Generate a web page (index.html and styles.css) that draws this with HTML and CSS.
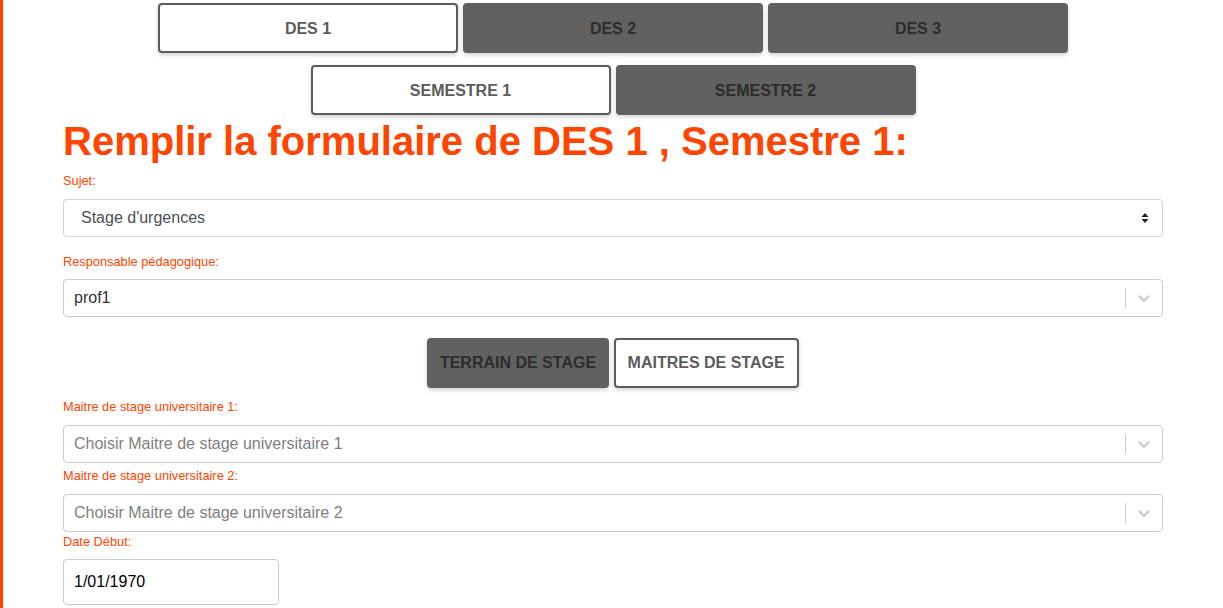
FILE: index.html
```html
<!DOCTYPE html>
<html lang="fr">
<head>
<meta charset="utf-8">
<title>Formulaire DES</title>
<link rel="stylesheet" href="styles.css">
</head>
<body>
<div class="page">
  <nav class="tabs tabs--des">
    <button class="tab tab--active">DES 1</button>
    <button class="tab tab--idle">DES 2</button>
    <button class="tab tab--idle">DES 3</button>
  </nav>
  <nav class="tabs tabs--sem">
    <button class="tab tab--active">SEMESTRE 1</button>
    <button class="tab tab--idle">SEMESTRE 2</button>
  </nav>

  <form class="form">
    <h1 class="title">Remplir la formulaire de DES 1 , Semestre 1:</h1>

    <div class="field">
      <label class="label">Sujet:</label>
      <div class="native-select">
        <span class="native-select__value">Stage d'urgences</span>
        <svg class="native-select__arrow" width="8" height="12" viewBox="0 0 8 12"><path d="M4 1 L7.5 5 H0.5 Z M4 11 L7.5 7 H0.5 Z" fill="#222"/></svg>
      </div>
    </div>

    <div class="field">
      <label class="label">Responsable pédagogique:</label>
      <div class="rselect">
        <span class="rselect__value">prof1</span>
        <span class="rselect__sep"></span>
        <span class="rselect__ind"><svg width="20" height="20" viewBox="0 0 20 20"><path fill="#ccc" d="M4.516 7.548c0.436-0.446 1.043-0.481 1.576 0l3.908 3.747 3.908-3.747c0.533-0.481 1.141-0.446 1.574 0 0.436 0.445 0.408 1.197 0 1.615-0.406 0.418-4.695 4.502-4.695 4.502-0.217 0.223-0.502 0.335-0.787 0.335s-0.57-0.112-0.789-0.335c0 0-4.287-4.084-4.695-4.502s-0.436-1.17 0-1.615z"/></svg></span>
      </div>
    </div>

    <div class="subtabs">
      <button type="button" class="subtab subtab--idle">TERRAIN DE STAGE</button>
      <button type="button" class="subtab subtab--active">MAITRES DE STAGE</button>
    </div>

    <div class="field field--tight1">
      <label class="label">Maitre de stage universitaire 1:</label>
      <div class="rselect">
        <span class="rselect__placeholder">Choisir Maitre de stage universitaire 1</span>
        <span class="rselect__sep"></span>
        <span class="rselect__ind"><svg width="20" height="20" viewBox="0 0 20 20"><path fill="#ccc" d="M4.516 7.548c0.436-0.446 1.043-0.481 1.576 0l3.908 3.747 3.908-3.747c0.533-0.481 1.141-0.446 1.574 0 0.436 0.445 0.408 1.197 0 1.615-0.406 0.418-4.695 4.502-4.695 4.502-0.217 0.223-0.502 0.335-0.787 0.335s-0.57-0.112-0.789-0.335c0 0-4.287-4.084-4.695-4.502s-0.436-1.17 0-1.615z"/></svg></span>
      </div>
    </div>

    <div class="field field--tight2">
      <label class="label">Maitre de stage universitaire 2:</label>
      <div class="rselect">
        <span class="rselect__placeholder">Choisir Maitre de stage universitaire 2</span>
        <span class="rselect__sep"></span>
        <span class="rselect__ind"><svg width="20" height="20" viewBox="0 0 20 20"><path fill="#ccc" d="M4.516 7.548c0.436-0.446 1.043-0.481 1.576 0l3.908 3.747 3.908-3.747c0.533-0.481 1.141-0.446 1.574 0 0.436 0.445 0.408 1.197 0 1.615-0.406 0.418-4.695 4.502-4.695 4.502-0.217 0.223-0.502 0.335-0.787 0.335s-0.57-0.112-0.789-0.335c0 0-4.287-4.084-4.695-4.502s-0.436-1.17 0-1.615z"/></svg></span>
      </div>
    </div>

    <div class="field field--last">
      <label class="label">Date Début:</label>
      <div class="date-input">1/01/1970</div>
    </div>
  </form>
</div>
</body>
</html>
```

FILE: styles.css
```css
html, body {
  margin: 0;
  padding: 0;
  overflow: hidden;
}

body {
  font-family: "Liberation Sans", Arial, sans-serif;
  background: #fff;
  border-left: 3px solid #ff4500;
  min-height: 608px;
  box-sizing: border-box;
}

.page {
  display: flex;
  flex-direction: column;
  align-items: center;
}

.tabs {
  display: flex;
  justify-content: center;
  gap: 5px;
}

.tabs--des {
  margin-top: 3px;
}

.tabs--sem {
  margin-top: 12px;
}

.tab {
  width: 300px;
  height: 50px;
  box-sizing: border-box;
  border-radius: 4px;
  font-family: "Liberation Sans", Arial, sans-serif;
  font-weight: bold;
  font-size: 16px;
  box-shadow: 0 2px 4px rgba(0, 0, 0, 0.18);
  padding: 1px 0 0;
}

.tab--active {
  background: #fff;
  border: 2px solid #5c5c5c;
  color: #5c5c5c;
}

.tab--idle {
  background: #616161;
  border: none;
  color: #2d2d2d;
}

.form {
  width: 1100px;
  display: flex;
  flex-direction: column;
}

.title {
  margin: 2px 0 6px;
  font-size: 40px;
  line-height: 48px;
  font-weight: bold;
  color: #ff4500;
}

.field {
  margin-bottom: 15px;
}

.field--tight1 {
  margin-bottom: 3.5px;
}

.field--tight2 {
  margin-bottom: 0;
}

.field--last {
  margin-bottom: 0;
}

.label {
  display: block;
  font-size: 12.8px;
  line-height: 19.5px;
  color: #ff4500;
  margin-bottom: 8px;
}

.native-select {
  height: 38px;
  box-sizing: border-box;
  border: 1px solid #ced4da;
  border-radius: 4px;
  display: flex;
  align-items: center;
  justify-content: space-between;
  padding: 0 13px 0 17px;
  font-size: 16px;
  color: #495057;
}

.rselect {
  height: 38px;
  box-sizing: border-box;
  border: 1px solid #ccc;
  border-radius: 4px;
  display: flex;
  align-items: center;
  font-size: 16px;
}

.rselect__value,
.rselect__placeholder {
  flex: 1;
  padding: 0 10px;
}

.rselect__value {
  color: #333;
}

.rselect__placeholder {
  color: #808080;
}

.rselect__sep {
  width: 1px;
  align-self: stretch;
  margin: 8px 0;
  background: #ccc;
}

.rselect__ind {
  display: flex;
  padding: 8px;
}

.subtabs {
  display: flex;
  justify-content: center;
  gap: 5px;
  margin: 6px 0 9px;
}

.subtab {
  height: 50px;
  box-sizing: border-box;
  border-radius: 4px;
  font-family: "Liberation Sans", Arial, sans-serif;
  font-weight: bold;
  font-size: 16px;
  box-shadow: 0 2px 4px rgba(0, 0, 0, 0.18);
  padding-top: 1px;
}

.subtab--idle {
  background: #616161;
  border: none;
  padding-left: 12.5px;
  padding-right: 12.5px;
  color: #2d2d2d;
}

.subtab--active {
  background: #fff;
  border: 2px solid #5c5c5c;
  padding-left: 12px;
  padding-right: 12px;
  color: #5c5c5c;
}

.date-input {
  width: 216px;
  height: 46px;
  box-sizing: border-box;
  border: 1px solid #ccc;
  border-radius: 4px;
  padding-left: 10px;
  display: flex;
  align-items: center;
  font-size: 16px;
  color: #000;
}
```
